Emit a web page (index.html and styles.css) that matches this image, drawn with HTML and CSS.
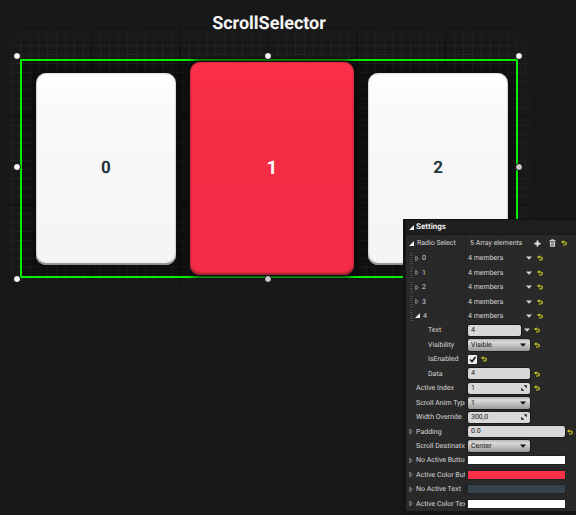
FILE: index.html
```html
<!DOCTYPE html>
<html lang="en">
<head>
<meta charset="utf-8">
<title>ScrollSelector</title>
<link rel="stylesheet" href="styles.css">
</head>
<body>
<svg class="defs" aria-hidden="true">
  <symbol id="undo" viewBox="0 0 12 12"><path d="M3 4H7.500Q10.500 4 10.500 7T7.500 10H4" fill="none" stroke="#cfd01a" stroke-width="2.400"/><path d="M5 0.500V7.500L0 4Z" fill="#cfd01a"/></symbol>
  <symbol id="down" viewBox="0 0 10 6"><path d="M0 0.500H10L5 6Z" fill="currentColor"/></symbol>
  <symbol id="closed" viewBox="0 0 8 12"><path d="M1.500 1.500L6.500 6L1.500 10.500Z" fill="none" stroke="#aaa" stroke-width="1.500"/></symbol>
  <symbol id="open" viewBox="0 0 10 10"><path d="M10 0V10H0Z" fill="#eee"/></symbol>
  <symbol id="drag" viewBox="0 0 12 12"><path d="M5.500 0.500H11.500V6.500ZM0.500 5.500V11.500H6.500Z" fill="#111"/></symbol>
</svg>
<main class="stage">
  <svg class="grid" aria-hidden="true">
    <defs>
      <pattern id="minor" x="3" y="1" width="8.850" height="8.850" patternUnits="userSpaceOnUse"><path d="M0 0.500H9M0.500 0V9" stroke="#282828" fill="none"/></pattern>
      <pattern id="major" x="2" y="27" width="88.500" height="88.500" patternUnits="userSpaceOnUse"><path d="M0 1H89M1 0V89" stroke="#0b0b0b" stroke-width="1.500" fill="none"/></pattern>
    </defs>
    <rect width="100%" height="100%" fill="url(#minor)"/>
    <rect width="100%" height="100%" fill="url(#major)"/>
  </svg>
  <h1 class="title">ScrollSelector</h1>
  <div class="frame">
    <button class="card">0</button>
    <button class="card active">1</button>
    <button class="card">2</button>
    <i class="handle left top"></i><i class="handle center top"></i><i class="handle right top"></i>
    <i class="handle left middle"></i><i class="handle right middle dim"></i>
    <i class="handle left bottom"></i><i class="handle center bottom dim"></i>
  </div>
</main>
<aside class="panel">
  <h2 class="head"><svg class="open"><use href="#open"/></svg>Settings</h2>
  <div class="row first">
    <div class="name"><svg class="open"><use href="#open"/></svg>Radio Select</div>
    <div class="value"><span class="count">5 Array elements</span>
      <button class="icon" aria-label="Add"><svg class="plus" viewBox="0 0 8 8"><path d="M4 0.500V7.500M0.500 4H7.500" stroke="#eee" stroke-width="2"/></svg></button>
      <button class="icon bin" aria-label="Clear"><svg class="trash" viewBox="0 0 14 16"><path d="M4.500 2V0.500H9.500V2H13V4H1V2ZM1.500 5H12.500L12 15.500H2Z" fill="#ccc"/><path d="M5 6.500V14M7 6.500V14M9 6.500V14" stroke="#555"/></svg></button>
      <button class="icon" aria-label="Reset"><svg class="undo"><use href="#undo"/></svg></button></div>
  </div>
  <div class="list">
    <div class="row"><div class="name item"><svg class="closed"><use href="#closed"/></svg>0</div><div class="value"><span class="members">4 members</span><svg class="down"><use href="#down"/></svg><button class="icon" aria-label="Reset"><svg class="undo"><use href="#undo"/></svg></button></div></div>
    <div class="row"><div class="name item"><svg class="closed"><use href="#closed"/></svg>1</div><div class="value"><span class="members">4 members</span><svg class="down"><use href="#down"/></svg><button class="icon" aria-label="Reset"><svg class="undo"><use href="#undo"/></svg></button></div></div>
    <div class="row"><div class="name item"><svg class="closed"><use href="#closed"/></svg>2</div><div class="value"><span class="members">4 members</span><svg class="down"><use href="#down"/></svg><button class="icon" aria-label="Reset"><svg class="undo"><use href="#undo"/></svg></button></div></div>
    <div class="row"><div class="name item"><svg class="closed"><use href="#closed"/></svg>3</div><div class="value"><span class="members">4 members</span><svg class="down"><use href="#down"/></svg><button class="icon" aria-label="Reset"><svg class="undo"><use href="#undo"/></svg></button></div></div>
    <div class="row"><div class="name item"><svg class="open"><use href="#open"/></svg>4</div><div class="value"><span class="members">4 members</span><svg class="down"><use href="#down"/></svg><button class="icon" aria-label="Reset"><svg class="undo"><use href="#undo"/></svg></button></div></div>
    <div class="row"><label class="name child" for="text">Text</label><div class="value"><input class="field short" id="text" value="4"><svg class="down"><use href="#down"/></svg><button class="icon" aria-label="Reset"><svg class="undo"><use href="#undo"/></svg></button></div></div>
    <div class="row"><label class="name child" for="vis">Visibility</label><div class="value"><span class="combo"><select class="field" id="vis"><option>Visible</option></select><svg class="down"><use href="#down"/></svg></span><button class="icon" aria-label="Reset"><svg class="undo"><use href="#undo"/></svg></button></div></div>
    <div class="row"><label class="name child" for="enabled">IsEnabled</label><div class="value"><span class="tick"><input type="checkbox" id="enabled" checked><svg viewBox="0 0 9 9"><path d="M2 4.500L4 6.500L7.500 2" fill="none" stroke="#111" stroke-width="1.500"/></svg></span><button class="icon" aria-label="Reset"><svg class="undo"><use href="#undo"/></svg></button></div></div>
    <div class="row"><label class="name child" for="data">Data</label><div class="value"><input class="field" id="data" value="4"><button class="icon" aria-label="Reset"><svg class="undo"><use href="#undo"/></svg></button></div></div>
    <div class="row"><label class="name base" for="index">Active Index</label><div class="value"><span class="combo"><input class="field" id="index" value="1"><svg class="drag"><use href="#drag"/></svg></span><button class="icon" aria-label="Reset"><svg class="undo"><use href="#undo"/></svg></button></div></div>
    <div class="row"><label class="name base" for="anim">Scroll Anim Type</label><div class="value"><span class="combo"><select class="field" id="anim"><option>1</option></select><svg class="down"><use href="#down"/></svg></span></div></div>
    <div class="row"><label class="name base" for="width">Width Override</label><div class="value"><span class="combo"><input class="field" id="width" value="300,0"><svg class="drag"><use href="#drag"/></svg></span></div></div>
    <div class="row"><label class="name" for="padding"><svg class="closed"><use href="#closed"/></svg>Padding</label><div class="value"><input class="field long" id="padding" value="0.0"><button class="icon edge" aria-label="Reset"><svg class="undo"><use href="#undo"/></svg></button></div></div>
    <div class="row"><label class="name base" for="dest">Scroll Destination</label><div class="value"><span class="combo"><select class="field" id="dest"><option>Center</option></select><svg class="down"><use href="#down"/></svg></span></div></div>
    <div class="row"><div class="name"><svg class="closed"><use href="#closed"/></svg>No Active Button</div><div class="value"><button class="swatch" aria-label="No Active Button"></button></div></div>
    <div class="row"><div class="name"><svg class="closed"><use href="#closed"/></svg>Active Color Button</div><div class="value"><button class="swatch red" aria-label="Active Color Button"></button></div></div>
    <div class="row"><div class="name"><svg class="closed"><use href="#closed"/></svg>No Active Text</div><div class="value"><button class="swatch slate" aria-label="No Active Text"></button></div></div>
    <div class="row"><div class="name"><svg class="closed"><use href="#closed"/></svg>Active Color Text</div><div class="value"><button class="swatch" aria-label="Active Color Text"></button></div></div>
  </div>
</aside>
</body>
</html>
```
FILE: styles.css
```css
* { box-sizing: border-box; }
body { margin: 0; min-height: 100vh; position: relative; background: #181818; font-family: Roboto, sans-serif; color: #d6d6d6; overflow: hidden; text-rendering: geometricPrecision; }
button, input, select { font-family: inherit; text-rendering: inherit; }
button { border: 0; padding: 0; cursor: pointer; }
svg { display: block; flex: none; }
.defs { position: absolute; width: 0; height: 0; }

.stage { position: relative; padding: 13px 58px 10px 20px; }
.grid {
  position: absolute; left: 0; top: 0; width: 100%; height: 100%;
  mask-image: linear-gradient(to right, transparent 4px, #000 20px, #000 calc(100% - 64px), transparent calc(100% - 36px)), linear-gradient(transparent 10px, #000 64px, #000 calc(100% - 16px), transparent);
  mask-composite: intersect;
}
.title { position: relative; margin: 0 0 24px; font-size: 18px; line-height: 22px; font-weight: 700; text-align: center; color: #f5f5f5; }
.frame { position: relative; display: flex; align-items: center; gap: 14px; padding: 1px 8px 1px 14px; border: 2px solid #04ea04; background: #0000004d; }
.card {
  flex: 140; height: 192px; padding-bottom: 2px; border-radius: 10px; font-size: 17px; font-weight: 700; color: #24363b;
  background: linear-gradient(#fff, #f9f9f9 20%, #f4f4f4);
  box-shadow: inset 0 -2px 1px #8c9292, inset 0 0 2px #999, 0 0 5px 2px #0c0c0c;
}
.card.active { flex: 165; height: 213px; font-size: 19px; color: #fff; background: linear-gradient(#fb3049, #f42d45 30%, #f22d45); box-shadow: inset 0 -2px 2px #9c2232, inset 0 0 2px #a62838, 0 0 5px 2px #0c0c0c; }
.handle { position: absolute; width: 8px; height: 8px; border: 1px solid #050505; border-radius: 50%; background: #fff; }
.dim { background: #ccc; }
.left { left: -9px; }
.center { left: calc(50% - 5px); }
.right { right: -7px; }
.top { top: -9px; }
.middle { top: calc(50% - 6px); }
.bottom { bottom: -7px; }

.panel { position: absolute; right: 0; bottom: 0; width: 173px; height: 296px; display: flex; flex-direction: column; padding-bottom: 4px; border-left: 3px solid #141414; background: #141414; font-size: 7px; line-height: 12px; }
.head { display: flex; align-items: center; gap: 2px; height: 16px; margin: 0; padding-left: 3px; font-size: 8px; font-weight: 700; color: #eee; background: #1e1e1e; border-top: 1px solid #111; border-bottom: 1px solid #191919; }
.row { display: grid; grid-template-columns: 60px 1fr; min-height: 0; background: #292929; }
.first { height: 16px; }
.list { flex: 1; display: grid; grid-auto-rows: 1fr; min-height: 0; }
.name { display: flex; align-items: center; gap: 3px; padding-left: 3px; overflow: hidden; white-space: nowrap; border-right: 1px solid #202020; }
.base { padding-left: 10px; }
.child { padding-left: 22px; }
.item { position: relative; padding-left: 9px; }
.item::before { content: ""; width: 3px; height: 11px; position: absolute; left: 4px; background: repeating-linear-gradient(#484848 0 1px, #222 1px 2px); }
.value { display: flex; align-items: center; padding-left: 2px; min-width: 0; }
.count { flex: none; width: 61px; padding-left: 2px; margin-right: 4px; white-space: nowrap; }
.members { width: 56px; }
.icon { width: 8px; background: none; display: grid; place-items: center; margin-left: 3px; }
.count + .icon { margin-left: 0; }
.bin { margin: 0 1px 0 7px; }
.edge { margin-left: 1px; }
.undo { width: 6px; height: 6px; }
.down { width: 6px; height: 4px; margin: 0 1px 0 2px; }
.open { width: 5px; height: 5px; }
.closed { width: 4px; height: 7px; }
.plus { width: 7px; height: 7px; }
.trash { width: 7px; height: 8px; }
.field { width: 62px; height: 11px; padding: 0 3px; border: 0; border-radius: 2px; background: #d8d8d8; font-size: 7px; line-height: 11px; color: #161616; box-shadow: 0 0 0 1px #1b1b1b; }
select.field { appearance: none; height: 12px; padding-top: 1px; background: linear-gradient(#b4b4b4, #dadada 25%, #999); }
.short { width: 53px; }
.short + .down { margin-left: 3px; }
.short ~ .icon { margin-left: 2px; }
.long { width: 97px; }
.combo, .tick { display: grid; align-items: center; }
.combo > *, .tick > * { grid-area: 1 / 1; }
.combo .down, .drag { justify-self: end; margin-right: 4px; color: #111; pointer-events: none; }
.drag { width: 6px; height: 6px; margin-right: 3px; }
.tick input { appearance: none; width: 9px; height: 9px; margin: 0; border-radius: 1px; background: #eee; }
.tick svg { width: 9px; height: 9px; pointer-events: none; }
.swatch { width: 97px; height: 8px; background: #fff; box-shadow: 0 0 0 1px #1d2222; }
.red { background: #fb3049; }
.slate { background: #35444a; }
```
